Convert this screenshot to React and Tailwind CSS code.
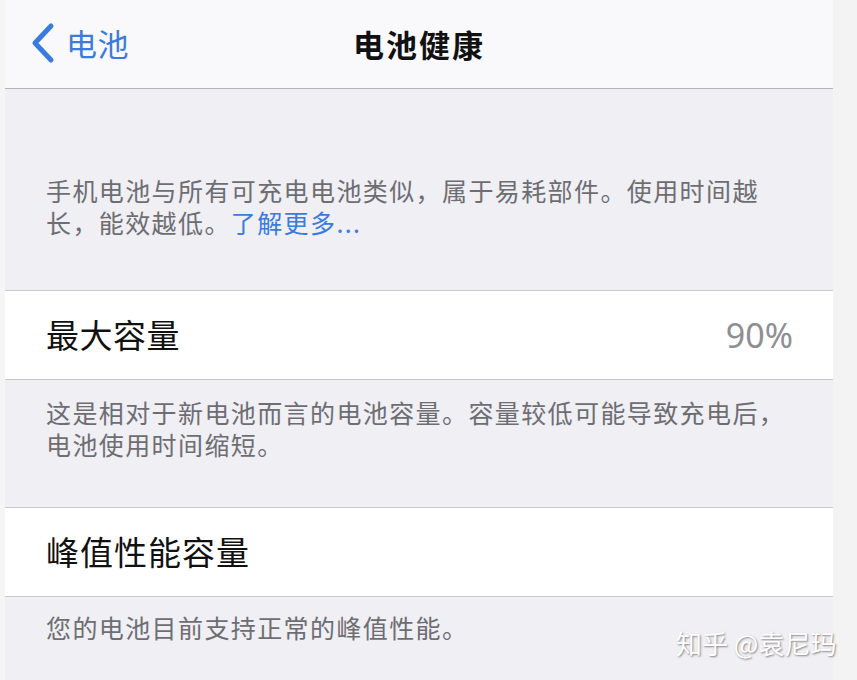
import React from "react";

const cjk = { fontFamily: '"Noto Sans CJK SC", "Noto Sans", sans-serif' };

export default function App() {
  return (
    <div className="relative flex h-[680px] w-[857px] overflow-hidden bg-[#f4f4f4]" style={cjk}>
      <div className="w-[5px] shrink-0 bg-[#f5f5f5]" />
      <div className="flex w-[828px] shrink-0 flex-col bg-[#efeff4]">
        {/* Header */}
        <div className="relative flex h-[89px] shrink-0 items-center justify-center border-b border-[#b4b4b6] bg-[#f9f9fb]">
          <div className="absolute left-[26px] top-[22px] flex items-center gap-[11px]">
            <svg width="24" height="42" viewBox="0 0 24 42" className="shrink-0">
              <polyline
                points="20,4 4,21 20,38"
                fill="none"
                stroke="#3a7be0"
                strokeWidth="5"
                strokeLinecap="round"
                strokeLinejoin="round"
              />
            </svg>
            <span className="text-[31px] leading-[40px] tracking-[0.5px] text-[#3a7be0]">电池</span>
          </div>
          <span className="text-[31px] font-bold leading-[40px] tracking-[2px] text-[#111]">电池健康</span>
        </div>

        {/* Footer 1 */}
        <div className="pl-[41px] pr-[40px] pt-[85px] pb-[52px] text-[25px] leading-[32px] tracking-[1.4px] text-[#6d6d72]">
          <p>
            手机电池与所有可充电电池类似，属于易耗部件。使用时间越长，能效越低。<span className="text-[#3a7be0]">了解更多...</span>
          </p>
        </div>

        {/* Row 1 */}
        <div className="flex h-[90px] shrink-0 items-center justify-between border-y border-[#c8c7cc] bg-white pl-[41px] pr-[40px]">
          <span className="text-[33px] tracking-[0.5px] text-[#111]">最大容量</span>
          <span className="text-[34px] text-[#8e8e93]" style={{ fontFamily: '"Noto Sans", "Inter", sans-serif' }}>90%</span>
        </div>

        {/* Footer 2 */}
        <div className="pl-[41px] pr-[40px] pt-[16px] pb-[47px] text-[25px] leading-[32px] tracking-[1.4px] text-[#6d6d72]">
          这是相对于新电池而言的电池容量。容量较低可能导致充电后，电池使用时间缩短。
        </div>

        {/* Row 2 */}
        <div className="flex h-[90px] shrink-0 items-center border-y border-[#c8c7cc] bg-white pl-[41px] pr-[40px]">
          <span className="text-[33px] tracking-[1px] text-[#111]">峰值性能容量</span>
        </div>

        {/* Footer 3 */}
        <div className="pl-[41px] pr-[40px] pt-[14px] text-[25px] leading-[32px] tracking-[1.4px] text-[#6d6d72]">
          您的电池目前支持正常的峰值性能。
        </div>
      </div>
      <div className="w-[24px] shrink-0 bg-[#f3f3f3]" />

      {/* Watermark */}
      <div className="absolute left-[676px] top-[626px] text-[26px] leading-[34px] text-white [text-shadow:1px_1px_2px_rgba(0,0,0,0.45)]">
        知乎 @袁尼玛
      </div>
    </div>
  );
}
